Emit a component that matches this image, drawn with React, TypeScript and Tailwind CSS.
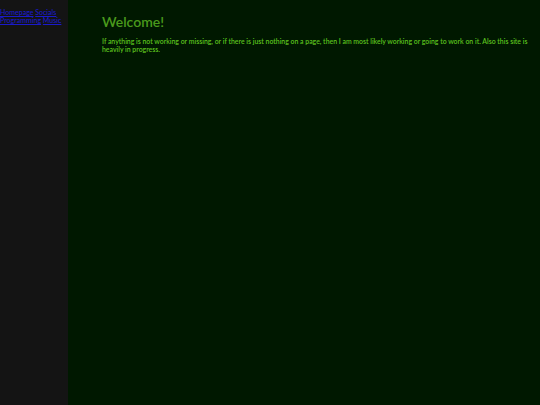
export default function App() {
  return (
    <div className="flex min-h-[405px] w-full font-['Lato',sans-serif]">
      <nav className="w-[68px] shrink-0 bg-[#141414] pt-[8px] text-[7px] leading-[8px] font-medium">
        <a href="#" className="text-[#1a1acc] underline">Homepage</a>{" "}
        <a href="#" className="text-[#1a1acc] underline">Socials</a>{" "}
        <a href="#" className="text-[#1a1acc] underline">Programming</a>{" "}
        <a href="#" className="text-[#1a1acc] underline">Music</a>
      </nav>
      <main className="flex-1 bg-[#001800] pl-[34px] pr-[4px] pt-[12px]">
        <h1 className="text-[14px] leading-[20px] font-semibold text-[#4a9a1c]">Welcome!</h1>
        <p className="mt-[6px] text-[6.9px] leading-[7.5px] font-semibold text-[#5cc21e]">
          If anything is not working or missing, or if there is just nothing on a page, then I am most likely working or going to work on it. Also this site is heavily in progress.
        </p>
      </main>
    </div>
  );
}
